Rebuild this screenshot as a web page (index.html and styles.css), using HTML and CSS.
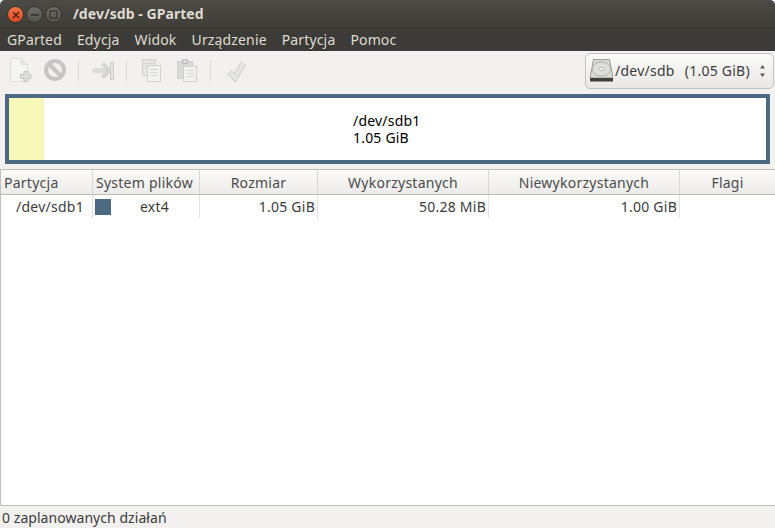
FILE: index.html
```html
<!DOCTYPE html>
<html lang="pl">
<head>
<meta charset="utf-8">
<title>/dev/sdb - GParted</title>
<link rel="stylesheet" href="styles.css">
</head>
<body>
<div class="window">
  <header class="titlebar">
    <div class="winbtns">
      <span class="winbtn close"><svg width="8" height="8" viewBox="0 0 8 8"><path d="M1 1L7 7M7 1L1 7" stroke="#4a1c08" stroke-width="1.4"/></svg></span>
      <span class="winbtn"><svg width="10" height="8" viewBox="0 0 10 8"><path d="M1 4H9" stroke="#33322e" stroke-width="1.6"/></svg></span>
      <span class="winbtn"><svg width="9" height="9" viewBox="0 0 9 9"><rect x="1" y="1" width="7" height="7" fill="none" stroke="#33322e" stroke-width="1.2"/></svg></span>
    </div>
    <span class="wintitle">/dev/sdb - GParted</span>
  </header>
  <nav class="menubar">
    <span>GParted</span><span>Edycja</span><span>Widok</span><span>Urządzenie</span><span>Partycja</span><span>Pomoc</span>
  </nav>
  <div class="toolbar">
    <div class="tools">
      <svg class="tool" width="24" height="24" viewBox="0 0 24 24"><path d="M.5 .5H11.500L17.500 6.500V23.500H.5Z" fill="#f5f5f3" stroke="#dcdcd8"/><path d="M11.500 .5V6.500H17.500" fill="#e8e8e5" stroke="#dcdcd8"/><path d="M14 13.500H18V16.500H21V20.500H18V23.500H14V20.500H10.500V16.500H14Z" fill="#dedfda" stroke="#c4c5c0"/></svg>
      <svg class="tool stop" width="24" height="24" viewBox="0 0 24 24"><circle cx="12" cy="12" r="9" fill="#f0efed" stroke="#c7c4c2" stroke-width="4"/><path d="M5.500 5.500L18.500 18.500" stroke="#c7c4c2" stroke-width="4"/></svg>
      <span class="sep"></span>
      <svg class="tool" width="23" height="24" viewBox="0 0 23 24"><path d="M2.500 12.500H13" stroke="#dcdcd8" stroke-width="5" stroke-linecap="round"/><path d="M10.500 5.500L17.500 12.500L10.500 19.500" fill="none" stroke="#d4d4d0" stroke-width="4"/><rect x="18.500" y="4.500" width="3" height="17" fill="#e4e4e0" stroke="#cbcbc7"/></svg>
      <span class="sep"></span>
      <svg class="tool" width="24" height="24" viewBox="0 0 24 24"><rect x="2.500" y="1.500" width="13" height="16" fill="#e6e6e3" stroke="#d0d0cc"/><path d="M5 5.500H13M5 8.500H8" stroke="#d4d4d0"/><rect x="7.500" y="7.500" width="13" height="16" fill="#f2f2f0" stroke="#d0d0cc"/><path d="M10 11.500H18M10 14.500H18M10 17.500H18" stroke="#d8d8d4"/></svg>
      <svg class="tool paste" width="22" height="24" viewBox="0 0 22 24"><rect x=".5" y="3.500" width="15" height="17" fill="#d8d8d5" stroke="#cfcfcb"/><rect x="5.500" y="1.500" width="5" height="4" fill="#dcdcd9" stroke="#bcbcb8"/><rect x="6.500" y="8.500" width="13" height="15" fill="#f2f2f0" stroke="#d0d0cc"/><path d="M9 12.500H17M9 15.500H17M9 18.500H17" stroke="#d8d8d4"/></svg>
      <span class="sep"></span>
      <svg class="tool" width="24" height="24" viewBox="0 0 24 24"><path d="M5 14L11 20L19.500 5" fill="none" stroke="#cfcfcb" stroke-width="6"/><path d="M5 14L11 20L19.500 5" fill="none" stroke="#e4e4e0" stroke-width="4"/></svg>
    </div>
    <div class="devsel">
      <svg class="hdd" width="25" height="26" viewBox="0 0 25 26"><path d="M4.500 1.500H20.500L24 20H1Z" fill="#d8d8d4" stroke="#9c9c98"/><path d="M1 20H24V23.500H1Z" fill="#3f3f3c"/><ellipse cx="12.500" cy="11" rx="9" ry="7" fill="#dededa" stroke="#b0b0ac"/><ellipse cx="12.500" cy="11" rx="2.500" ry="1.800" fill="#f0f0ed" stroke="#b8b8b4"/></svg>
      <span class="devname">/dev/sdb</span>
      <span class="devsize">(1.05 GiB)</span>
      <svg class="updown" width="5" height="12" viewBox="0 0 5 12"><path d="M2.500 0L5 3.500H0Z M2.500 12L0 8.500H5Z" fill="#5a5a5a"/></svg>
    </div>
  </div>
  <section class="mapwrap">
    <div class="partmap">
      <div class="used"></div>
      <div class="maplabel"><div>/dev/sdb1</div><div>1.05 GiB</div></div>
    </div>
  </section>
  <section class="table">
    <div class="row head">
      <div class="th left">Partycja</div>
      <div class="th left">System plików</div>
      <div class="th">Rozmiar</div>
      <div class="th">Wykorzystanych</div>
      <div class="th">Niewykorzystanych</div>
      <div class="th">Flagi</div>
    </div>
    <div class="row body">
      <div class="td devcell">/dev/sdb1</div>
      <div class="td fscell"><span class="swatch"></span><span class="fsname">ext4</span></div>
      <div class="td num">1.05 GiB</div>
      <div class="td num">50.28 MiB</div>
      <div class="td num">1.00 GiB</div>
      <div class="td"></div>
    </div>
  </section>
  <footer class="status">0 zaplanowanych działań</footer>
</div>
</body>
</html>
```
FILE: styles.css
```css
* { box-sizing: border-box; }
html, body { margin: 0; height: 100%; }
body { font-family: "Noto Sans", "Open Sans", sans-serif; font-size: 14px; letter-spacing: .25px; color: #3c3c3c; background: #f2f1f0; overflow: hidden; }
.window { width: 775px; height: 528px; display: flex; flex-direction: column; }
.titlebar { height: 27px; flex: none; display: flex; align-items: center; background: linear-gradient(#4c4a45, #3f3e39); border-radius: 5px 5px 0 0; padding-left: 7px; }
.winbtns { display: flex; gap: 2px; padding-top: 2px; }
.winbtn { width: 17px; height: 17px; border-radius: 50%; display: flex; align-items: center; justify-content: center; background: linear-gradient(#6d6c67, #54534e); border: 1px solid #33322e; }
.winbtn.close { background: linear-gradient(#f4744a, #dd4a1c); }
.wintitle { margin-left: 11px; font-weight: 700; font-size: 14px; letter-spacing: .05px; color: #dfdbd2; }
.menubar { height: 24px; flex: none; display: flex; gap: 15px; align-items: center; padding: 1px 0 0 7px; background: #3c3b37; color: #dfdbd2; letter-spacing: .15px; }
.toolbar { height: 38px; flex: none; display: flex; justify-content: space-between; align-items: center; padding-right: 1px; background: #f2f1f0; }
.tools { display: flex; align-items: center; padding-left: 10px; height: 100%; }
.tool { display: block; }
.stop { margin-left: 9px; }
.paste { margin-left: 13px; }
.sep { width: 1px; height: 21px; background: #dcdbd9; margin: 0 13px 0 11px; }
.devsel { width: 189px; height: 36px; margin-top: 1px; display: flex; align-items: center; padding-left: 3px; border: 1px solid #c4c3c0; border-radius: 5px; background: linear-gradient(#fbfbfa, #e9e8e6); color: #3c3c3c; }
.hdd { flex: none; }
.devname { margin-left: 1px; }
.devsize { margin-left: 10px; }
.updown { margin-left: auto; margin-right: 8px; }
.mapwrap { flex: none; padding: 5px 5px 5px; height: 80px; }
.partmap { position: relative; height: 70px; border: 4px solid #4b6983; background: #fff; }
.used { position: absolute; left: 0; top: 0; bottom: 0; width: 35px; background: #f8f8ba; }
.maplabel { position: absolute; left: 344px; top: 14px; color: #000; line-height: 17px; letter-spacing: .2px; }
.table { flex: 1; min-height: 0; background: #fff; border: 1px solid #c0bfbc; border-right: 0; }
.row { display: grid; grid-template-columns: 92px 107px 118px 171px 191px 1fr; }
.head { height: 25px; border-bottom: 1px solid #bdbcb9; background: linear-gradient(#fbfbfa, #ecebe9); }
.th { display: flex; align-items: center; justify-content: center; border-right: 1px solid #d8d7d4; color: #4c4c4c; white-space: nowrap; }
.th:last-child { border-right: 0; }
.th.left { justify-content: flex-start; padding-left: 3px; }
.body { height: 23px; }
.td { display: flex; align-items: center; border-right: 1px solid #e4e3e1; white-space: nowrap; color: #3c3c3c; }
.td:last-child { border-right: 0; }
.devcell { padding-left: 15px; }
.fscell { padding-left: 2px; }
.swatch { width: 16px; height: 16px; background: #4b6983; flex: none; }
.fsname { margin-left: 29px; }
.num { justify-content: flex-end; padding-right: 2px; }
.status { height: 22px; flex: none; display: flex; align-items: center; padding: 1px 0 0 2px; letter-spacing: .05px; color: #3c3c3c; }
```
